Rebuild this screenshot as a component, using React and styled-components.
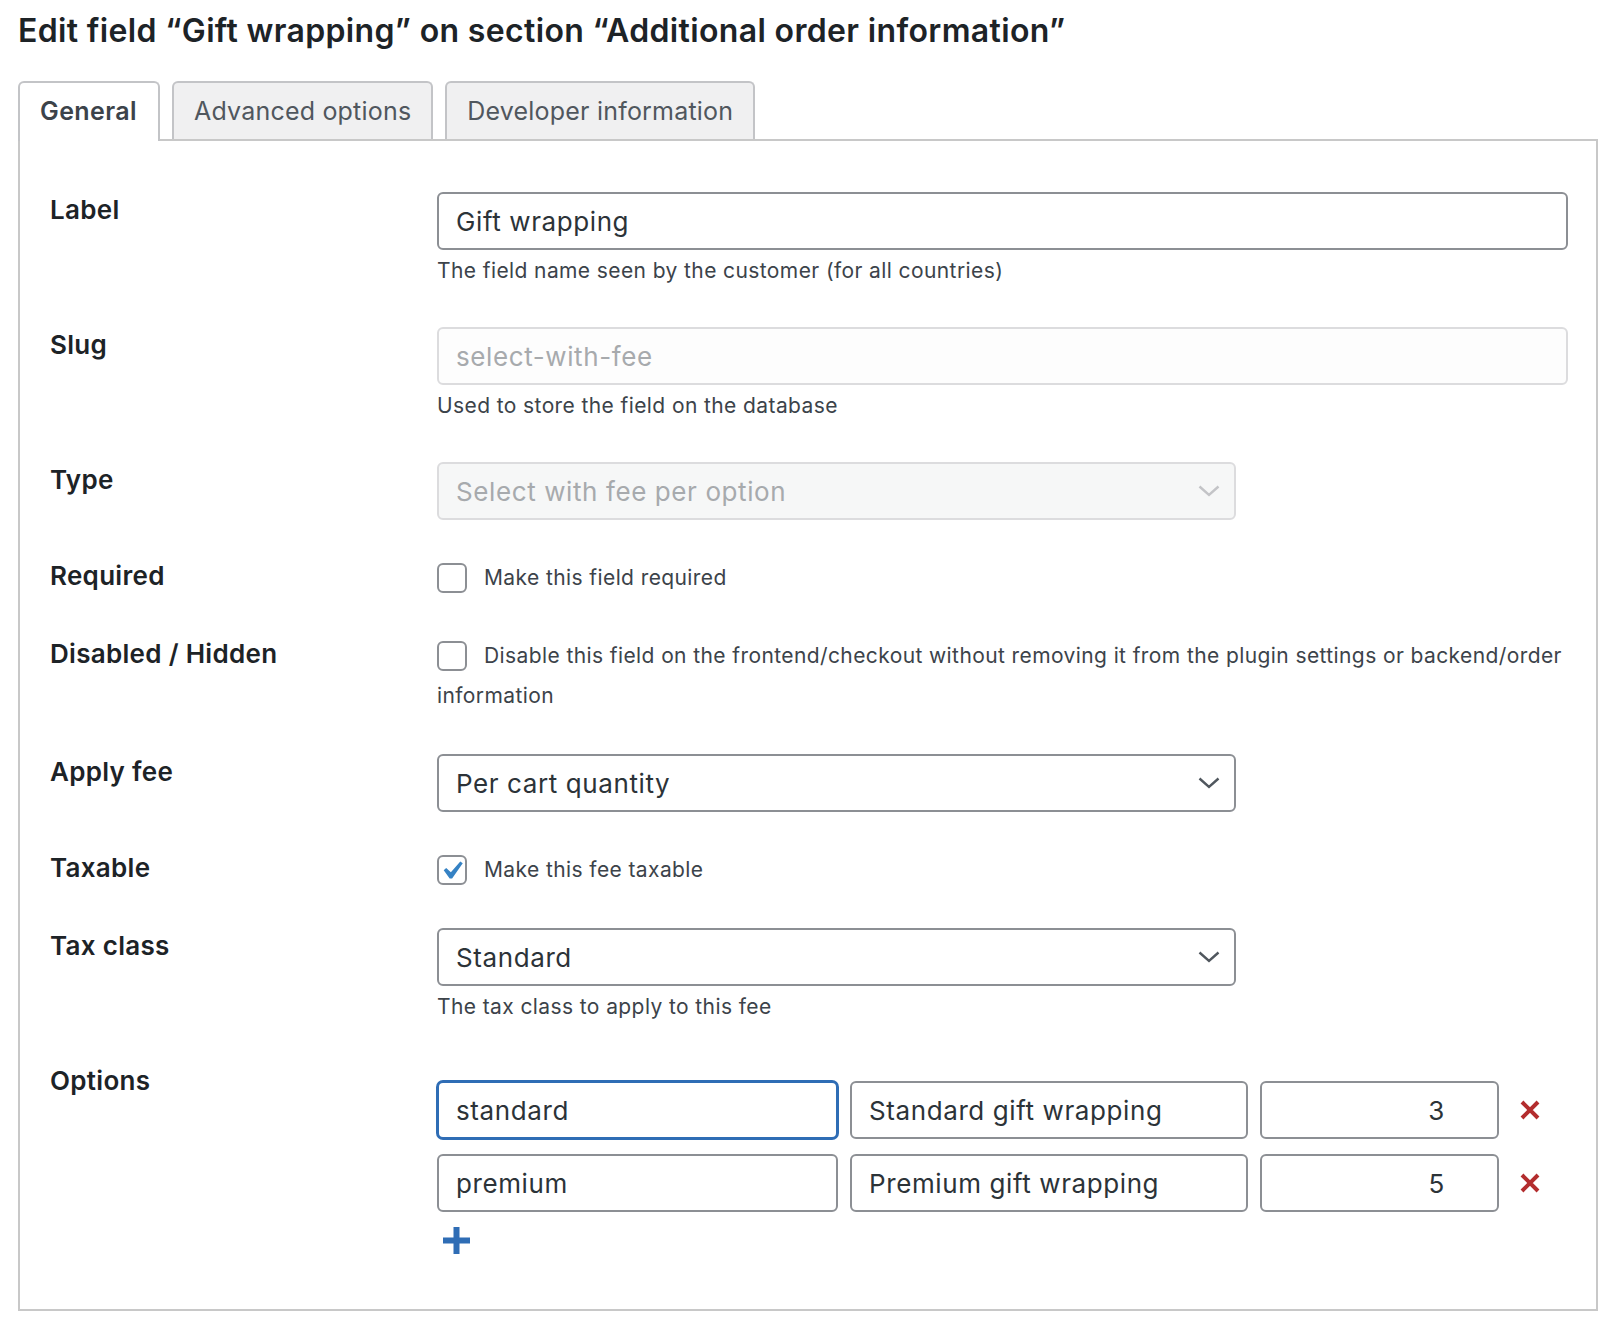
import React from 'react'
import styled, {createGlobalStyle, css} from 'styled-components'

const GlobalStyle = createGlobalStyle`
  * { box-sizing: border-box; }
  body {
    margin: 0;
    background: #fff;
    font-family: Inter, "Noto Sans", sans-serif;
    color: #3c434a;
  }
`;

const Page = styled.div`
  padding: 11px 16px 0 18px;
`;
const Title = styled.h1`
  margin: 0 0 31px;
  font-size: 32px;
  line-height: 39px;
  font-weight: 600;
  color: #1d2327;
  letter-spacing: 0.35px;
`;
const TabBar = styled.div`
  display: flex;
  align-items: flex-end;
  gap: 12px;
`;
const Tab = styled.div`
  height: 58px;
  padding: 0 20px;
  border: 2px solid #c3c4c7;
  border-bottom: none;
  border-radius: 6px 6px 0 0;
  background: #f0f0f1;
  color: #50575e;
  font-size: 25px;
  line-height: 56px;
  letter-spacing: 0.2px;
  ${p => p.$active && css`
    position: relative;
    z-index: 1;
    height: 60px;
    margin-bottom: -2px;
    padding: 0 21px 0 20px;
    background: #fff;
    color: #3c434a;
    font-weight: 600;
    letter-spacing: 0.4px;
  `}
`;
const Panel = styled.div`
  border: 2px solid #c8c8c8;
  padding: 51px 28px 55px 30px;
`;
const Row = styled.div`
  display: grid;
  grid-template-columns: 387px 1fr;
  margin-bottom: ${p => p.$last ? 0 : 38}px;
`;
const Label = styled.div`
  font-size: 26px;
  line-height: 36px;
  font-weight: 600;
  color: #1d2327;
  letter-spacing: 0.3px;
`;
const Field = styled.div`
  min-width: 0;
  padding-top: ${p => p.$top || 0}px;
`;
const Input = styled.input`
  display: block;
  width: ${p => p.$width ? `${p.$width}px` : '100%'};
  height: 58px;
  padding: 0 ${p => p.$right ? 52 : 17}px 0 17px;
  border: 2px solid #8c8f94;
  border-radius: 6px;
  background: #fff;
  font-family: inherit;
  font-size: 26px;
  letter-spacing: 0.6px;
  color: #2c3338;
  text-align: ${p => p.$right ? 'right' : 'left'};
  outline: none;
  &:disabled {
    border-color: #dcdcde;
    background: #fdfdfd;
    color: #a7aaad;
  }
  ${p => p.$focus && css`
    border-color: #2f6db5;
    box-shadow: 0 0 0 1px #2f6db5;
  `}
`;
const Description = styled.p`
  margin: 6px 0 3px;
  font-size: 21px;
  line-height: 30px;
  letter-spacing: 0.4px;
  color: #3c434a;
`;
const SelectBox = styled.div`
  display: flex;
  align-items: center;
  justify-content: space-between;
  width: 799px;
  height: 58px;
  padding: 0 14px 0 17px;
  border: 2px solid ${p => p.$disabled ? '#dcdcde' : '#8c8f94'};
  border-radius: 6px;
  background: ${p => p.$disabled ? '#f6f7f7' : '#fff'};
  color: ${p => p.$disabled ? '#a7aaad' : '#2c3338'};
  font-size: 26px;
  letter-spacing: 0.6px;
`;
const CheckLine = styled.div`
  font-size: 21px;
  line-height: 40px;
  letter-spacing: 0.4px;
  color: #3c434a;
`;
const Box = styled.span`
  display: inline-flex;
  align-items: center;
  justify-content: center;
  width: 30px;
  height: 30px;
  margin-right: 17px;
  border: 2px solid #8c8f94;
  border-radius: 6px;
  vertical-align: -8px;
  background: #fff;
`;
const OptionRow = styled.div`
  display: flex;
  align-items: center;
  gap: 12px;
  margin-bottom: 15px;
`;
const RemoveButton = styled.span`
  display: flex;
  margin-left: 9px;
  color: #b32d2e;
`;
const AddButton = styled.span`
  display: block;
  width: 27px;
  height: 27px;
  margin: 2px 0 0 6px;
  color: #2f6db5;
`;

function Chevron({color}) {
    return (
        <svg width="22" height="12" viewBox="0 0 22 12" fill="none" stroke={color} strokeWidth="2.4">
            <path d="M1.5 1.5 L11 10 L20.5 1.5"/>
        </svg>
    )
}

function Checkbox({checked}) {
    return (
        <Box>
            {checked && (
                <svg width="30" height="30" viewBox="3.2 2.45 14.2 14.2">
                    <path fill="#3582c4" d="M14.83 4.89l1.34.94-5.81 8.38H9.02L5.78 9.67l1.34-1.25 2.57 2.4z"/>
                </svg>
            )}
        </Box>
    )
}

function Remove() {
    return (
        <RemoveButton>
            <svg width="20" height="20" viewBox="0 0 20 20" stroke="currentColor" strokeWidth="4">
                <path d="M2 2 L18 18 M18 2 L2 18"/>
            </svg>
        </RemoveButton>
    )
}

const options = [
    {slug: 'standard', label: 'Standard gift wrapping', fee: '3', focus: true},
    {slug: 'premium', label: 'Premium gift wrapping', fee: '5'},
];

function App() {
    return (
        <Page>
            <GlobalStyle/>
            <Title>Edit field “Gift wrapping” on section “Additional order information”</Title>
            <TabBar>
                <Tab $active>General</Tab>
                <Tab>Advanced options</Tab>
                <Tab>Developer information</Tab>
            </TabBar>
            <Panel>
                <Row>
                    <Label>Label</Label>
                    <Field>
                        <Input defaultValue="Gift wrapping"/>
                        <Description>The field name seen by the customer (for all countries)</Description>
                    </Field>
                </Row>
                <Row>
                    <Label>Slug</Label>
                    <Field>
                        <Input disabled defaultValue="select-with-fee"/>
                        <Description>Used to store the field on the database</Description>
                    </Field>
                </Row>
                <Row>
                    <Label>Type</Label>
                    <Field>
                        <SelectBox $disabled>
                            <span>Select with fee per option</span>
                            <Chevron color="#c3c4c7"/>
                        </SelectBox>
                    </Field>
                </Row>
                <Row>
                    <Label>Required</Label>
                    <Field>
                        <CheckLine><Checkbox/>Make this field required</CheckLine>
                    </Field>
                </Row>
                <Row>
                    <Label>Disabled / Hidden</Label>
                    <Field>
                        <CheckLine>
                            <Checkbox/>Disable this field on the frontend/checkout without removing it from the plugin settings or backend/order information
                        </CheckLine>
                    </Field>
                </Row>
                <Row>
                    <Label>Apply fee</Label>
                    <Field>
                        <SelectBox>
                            <span>Per cart quantity</span>
                            <Chevron color="#50575e"/>
                        </SelectBox>
                    </Field>
                </Row>
                <Row>
                    <Label>Taxable</Label>
                    <Field>
                        <CheckLine><Checkbox checked/>Make this fee taxable</CheckLine>
                    </Field>
                </Row>
                <Row>
                    <Label>Tax class</Label>
                    <Field>
                        <SelectBox>
                            <span>Standard</span>
                            <Chevron color="#50575e"/>
                        </SelectBox>
                        <Description>The tax class to apply to this fee</Description>
                    </Field>
                </Row>
                <Row $last>
                    <Label>Options</Label>
                    <Field $top={18}>
                        {options.map(o => (
                            <OptionRow key={o.slug}>
                                <Input $width={401} $focus={o.focus} defaultValue={o.slug}/>
                                <Input $width={398} defaultValue={o.label}/>
                                <Input $width={239} $right defaultValue={o.fee}/>
                                <Remove/>
                            </OptionRow>
                        ))}
                        <AddButton>
                            <svg width="27" height="27" viewBox="0 0 27 27" fill="currentColor">
                                <rect x="10.5" y="0" width="6" height="27"/>
                                <rect x="0" y="10.5" width="27" height="6"/>
                            </svg>
                        </AddButton>
                    </Field>
                </Row>
            </Panel>
        </Page>
    )
}

export default App
